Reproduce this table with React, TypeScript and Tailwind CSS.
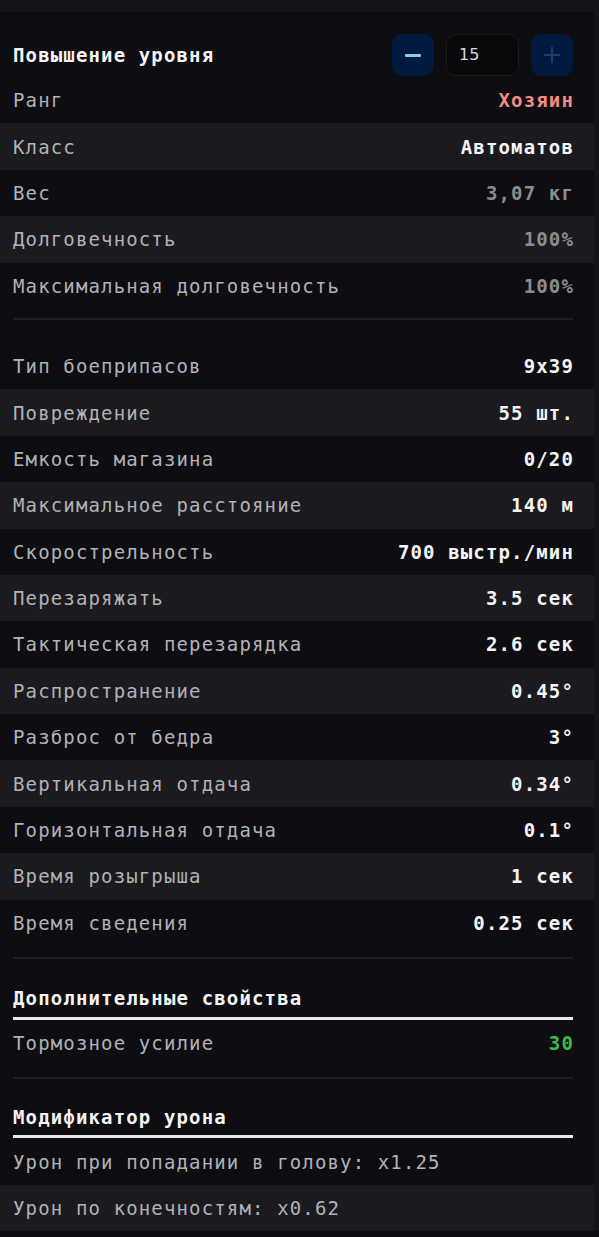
import React from "react";

type Row = { label: string; value: string; color?: string };

const section1: Row[] = [
  { label: "Ранг", value: "Хозяин", color: "text-[#f28b85]" },
  { label: "Класс", value: "Автоматов", color: "text-[#f4f4f6]" },
  { label: "Вес", value: "3,07 кг", color: "text-[#8c8c90]" },
  { label: "Долговечность", value: "100%", color: "text-[#8c8c90]" },
  { label: "Максимальная долговечность", value: "100%", color: "text-[#8c8c90]" },
];

const section2: Row[] = [
  { label: "Тип боеприпасов", value: "9x39" },
  { label: "Повреждение", value: "55 шт." },
  { label: "Емкость магазина", value: "0/20" },
  { label: "Максимальное расстояние", value: "140 м" },
  { label: "Скорострельность", value: "700 выстр./мин" },
  { label: "Перезаряжать", value: "3.5 сек" },
  { label: "Тактическая перезарядка", value: "2.6 сек" },
  { label: "Распространение", value: "0.45°" },
  { label: "Разброс от бедра", value: "3°" },
  { label: "Вертикальная отдача", value: "0.34°" },
  { label: "Горизонтальная отдача", value: "0.1°" },
  { label: "Время розыгрыша", value: "1 сек" },
  { label: "Время сведения", value: "0.25 сек" },
];

function StatRow({ row, odd }: { row: Row; odd: boolean }) {
  return (
    <div
      className={
        "h-[46.4px] flex items-center justify-between pl-[13px] pr-[20px] " +
        (odd ? "bg-[#1b1b1f]" : "")
      }
    >
      <span className="text-[#b2b2b7]">{row.label}</span>
      <span className={"font-bold " + (row.color ?? "text-[#f4f4f6]")}>{row.value}</span>
    </div>
  );
}

export default function App() {
  return (
    <div className="w-[599px] min-h-[1237px] bg-[#0e0e12] font-['DejaVu_Sans_Mono',monospace] text-[19px] leading-[28px] tracking-[0.06em]">
      <div className="h-[12px] bg-[#141418]" />
      <div className="flex">
        <div className="w-[594px]">
          <div className="h-[65px] pt-[21px] flex items-center justify-between pl-[13px] pr-[21px]">
            <span className="font-bold text-[#f4f4f6]">Повышение уровня</span>
            <div className="flex items-center gap-[12px]">
              <button className="w-[42px] h-[42px] rounded-[10px] bg-[#021a40] flex items-center justify-center">
                <span className="block w-[16px] h-[3px] bg-[#94c4f2] rounded-[1px]" />
              </button>
              <div className="w-[73px] h-[42px] rounded-[10px] bg-[#09090c] border border-[#1a1a20] flex items-center pl-[12px] text-[16px] tracking-normal text-[#d8d8de] font-['DejaVu_Sans',sans-serif]">
                15
              </div>
              <button className="w-[42px] h-[42px] rounded-[10px] bg-[#021a40] flex items-center justify-center">
                <svg width="18" height="18" viewBox="0 0 18 18">
                  <path d="M9 1v16M1 9h16" stroke="#1b3b6c" strokeWidth="2" />
                </svg>
              </button>
            </div>
          </div>
          {section1.map((r, i) => (
            <StatRow key={r.label} row={r} odd={i % 2 === 1} />
          ))}
          <div className="mt-[9px] ml-[13px] mr-[21px] h-[2px] bg-[#1e1e23]" />
          <div className="mt-[23px]">
            {section2.map((r, i) => (
              <StatRow key={r.label} row={r} odd={i % 2 === 1} />
            ))}
          </div>
          <div className="mt-[11px] ml-[13px] mr-[21px] h-[2px] bg-[#1e1e23]" />
          <div className="ml-[13px] mr-[21px] pt-[25px] pb-[5px] border-b-[3px] border-[#e8e8ea] font-bold text-[#f4f4f6]">
            Дополнительные свойства
          </div>
          <StatRow row={{ label: "Тормозное усилие", value: "30", color: "text-[#3dbb4a]" }} odd={false} />
          <div className="mt-[11px] ml-[13px] mr-[21px] h-[2px] bg-[#1e1e23]" />
          <div className="ml-[13px] mr-[21px] pt-[24px] pb-[4px] border-b-[3px] border-[#e8e8ea] font-bold text-[#f4f4f6]">
            Модификатор урона
          </div>
          <div className="h-[46.4px] flex items-center pl-[13px] text-[#b2b2b7]">
            Урон при попадании в голову: x1.25
          </div>
          <div className="h-[46.4px] flex items-center pl-[13px] text-[#b2b2b7] bg-[#1b1b1f]">
            Урон по конечностям: x0.62
          </div>
        </div>
        <div className="w-[5px] bg-[#141418]" />
      </div>
    </div>
  );
}
